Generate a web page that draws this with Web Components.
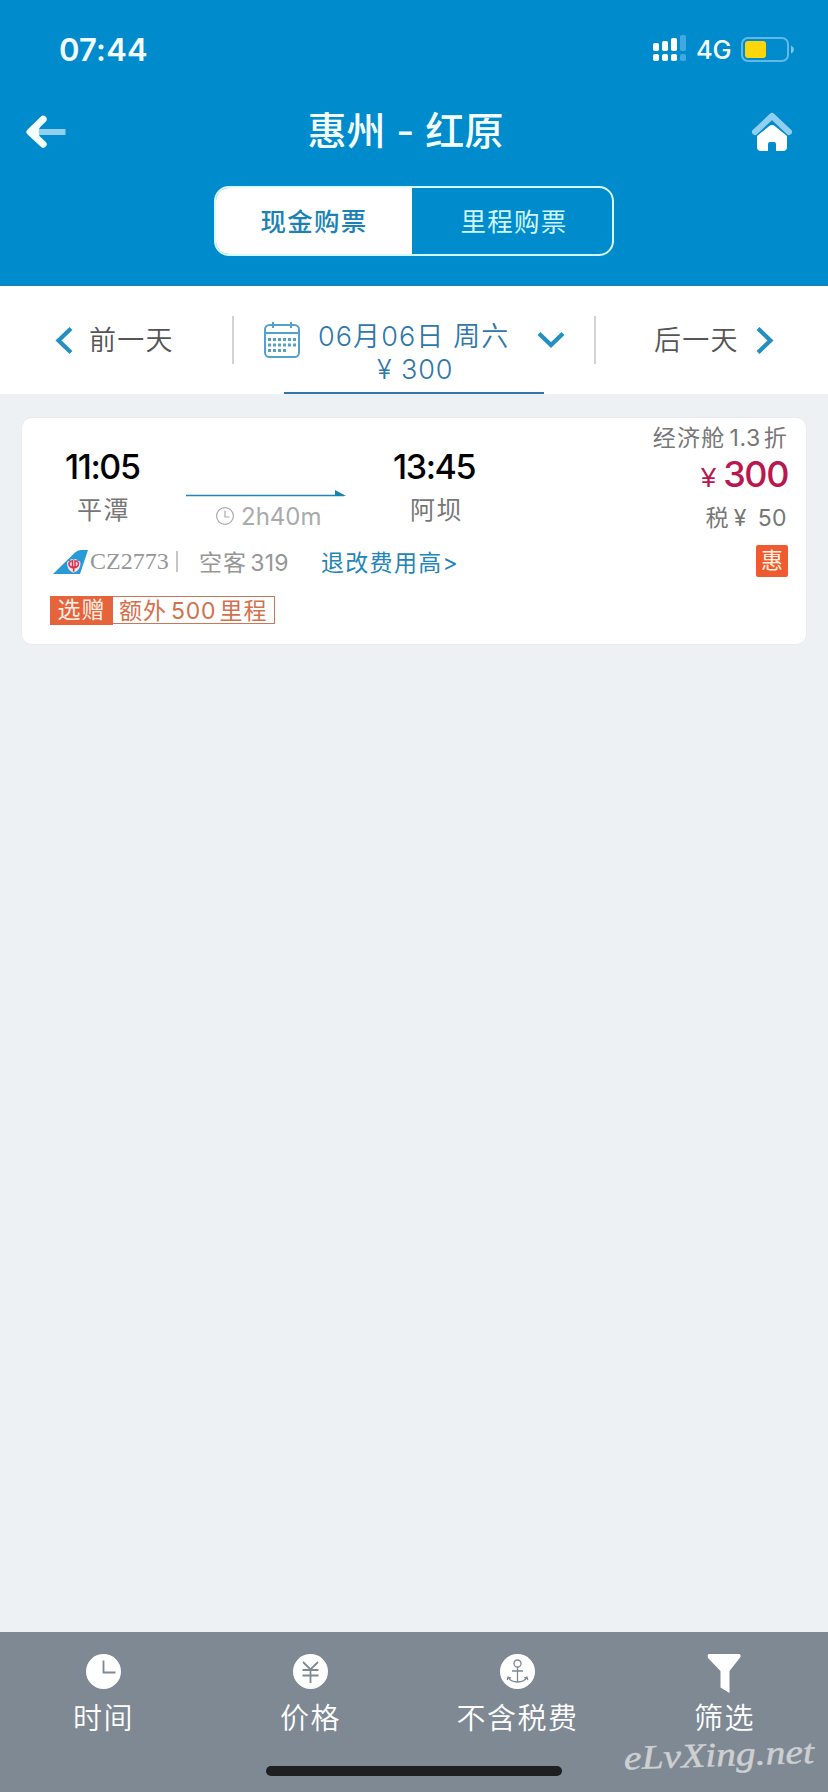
<!DOCTYPE html>
<html lang="zh-CN">
<head>
<meta charset="utf-8">
<title>惠州 - 红原</title>
<style>
html,body{margin:0;padding:0}
body{width:828px;height:1792px;overflow:hidden;background:#edf1f4;font-family:Inter,"Noto Sans CJK SC",sans-serif}
</style>
</head>
<body>
<flight-app></flight-app>
<script>
const define = (name, css, html) => {
  const t = document.createElement('template');
  t.innerHTML = `<style>*{box-sizing:border-box}svg{display:block;overflow:visible}${css}</style>${html}`;
  customElements.define(name, class extends HTMLElement {
    constructor() {
      super();
      this.attachShadow({ mode: 'open' }).append(t.content.cloneNode(true));
    }
  });
};

define('status-bar', `
:host{display:flex;height:100px;padding:0 34px 0 59px;color:#f4ffff}
.time{font-size:31px;font-weight:600;line-height:40px;margin-top:30px;letter-spacing:.2px;flex:1}
.net{font-size:25.5px;font-weight:500;line-height:30px;margin:35px 0 0 10px;width:36px;letter-spacing:-.3px}
.sig{margin-top:35px}.bat{margin:37px 0 0 9px}`, `
<span class="time">07:44</span>
<svg class="sig" width="33" height="26" fill="#fff"><rect y="8" width="6" height="8" rx="1.8"/><rect x="9" y="6" width="6" height="10" rx="1.8"/><rect x="18" y="3" width="6" height="13" rx="1.8"/><rect y="19" width="6" height="7" rx="1.8"/><rect x="9" y="19" width="6" height="7" rx="1.8"/><rect x="18" y="19" width="6" height="7" rx="1.8"/><g fill="#42a8df"><rect x="27" width="6" height="16" rx="1.8"/><rect x="27" y="19" width="6" height="7" rx="1.8"/></g></svg>
<span class="net">4G</span>
<svg class="bat" width="53" height="25"><rect x="1" y="1" width="46" height="23" rx="6" fill="none" stroke="#62b9e8" stroke-width="2"/><rect x="4" y="4" width="21" height="17" rx="3" fill="#fcd60b"/><path d="M50 8.5Q53 10 53 12.5T50 16.5Z" fill="#80c5e9"/></svg>`);

define('title-bar', `
:host{display:flex;align-items:flex-start;height:86px;padding:0 36px 0 26px;color:#f4ffff}
.b{margin-top:15px}.h{margin-top:12px}
h1{flex:1;text-align:center;margin:0;padding-right:7px;font-size:39px;font-weight:500;line-height:61px;letter-spacing:.2px}`, `
<svg class="b" width="40" height="34"><path d="M12 17H39.5" stroke="#91cff0" stroke-width="6"/><path d="M17.2 4.2L4 17L17.2 29.2" fill="none" stroke="#f4ffff" stroke-width="7" stroke-linecap="round" stroke-linejoin="round"/><path d="M15 10Q10.500 17 15 24L3 17Z" fill="#f4ffff"/></svg>
<h1><slot></slot></h1>
<svg class="h" width="40" height="39"><path d="M3 20L20 4L37 20" fill="none" stroke="#91cff0" stroke-width="6" stroke-linecap="round" stroke-linejoin="round"/><path d="M5 24L17 14.2Q20 12 23 14.2L35 24V35Q35 39 31 39H24V32Q24 30 22 30H18Q16 30 16 32V39H9Q5 39 5 35Z" fill="#fff"/></svg>`);

define('mode-switch', `
:host{display:flex;width:400px;height:70px;margin:0 auto;border:2px solid #d5fbff;border-radius:15px;overflow:hidden;font-size:25.5px;letter-spacing:1.2px;line-height:67px;text-align:center}
.on{width:196px;background:#fff;color:#1b82b5;font-weight:500}
.off{flex:1;color:#cff7ff;padding-left:4px}`, `
<div class="on"><slot name="cash"></slot></div><div class="off"><slot name="miles"></slot></div>`);

define('app-header', `
:host{display:block;height:286px;background:#008bcd;border-bottom:1px solid #1b7eb5}`, `
<status-bar></status-bar><title-bar>惠州 - 红原</title-bar>
<mode-switch><span slot="cash">现金购票</span><span slot="miles">里程购票</span></mode-switch>`);

define('date-bar', `
:host{display:flex;height:108px;background:#fff;color:#555;font-size:27px;white-space:nowrap}
.side{display:flex;width:232px;padding:41px 0 0 56px;font-weight:350;letter-spacing:1.2px;line-height:27px}
.side span{line-height:28px;margin-left:17px}
.rule{width:2px;height:48px;margin-top:30px;background:#d0d4d7}
.mid{display:grid;grid-template-columns:36px 192px 26px;column-gap:17px;width:360px;padding-left:30px;color:#3077aa;position:relative;align-content:start;font-weight:350}
.mid .cal{margin-top:36px}.mid .dn{margin:46px 0 0 12px}
.date{padding-top:34px;line-height:34px;letter-spacing:1.1px;margin-left:1px}
.fare{grid-column:1/4;line-height:30px;margin-top:-3px;padding-left:113px;letter-spacing:.9px}
.mid i{position:absolute;left:50px;bottom:0;width:260px;height:2px;background:#3375a8}
.next{padding-left:58px}.next span{margin:0 18px 0 0}
path{fill:none;stroke:#2490c0;stroke-width:4.2}`, `
<div class="side"><svg width="16" height="27"><path d="M15 1.5L2.5 13.5L15 25.5"/></svg><span>前一天</span></div>
<div class="rule"></div>
<div class="mid">
<svg class="cal" width="36" height="36" fill="none" stroke="#55a2c8" stroke-width="2"><rect x="1" y="3" width="34" height="32" rx="4.5"/><line x1="1" x2="35" y1="11" y2="11"/><line x1="9" x2="9" y1="0" y2="6"/><line x1="27" x2="27" y1="0" y2="6"/><g stroke-width="3" stroke-dasharray="3 2"><line x1="4" x2="32" y1="17.5" y2="17.5"/><line x1="4" x2="32" y1="23" y2="23"/><line x1="4" x2="22" y1="28.5" y2="28.5"/></g></svg>
<span class="date">06月06日 周六</span>
<svg class="dn" width="26" height="16"><path d="M1 1.5L13 13L25 1.5"/></svg>
<span class="fare">¥ 300</span><i></i></div>
<div class="rule"></div>
<div class="side next"><span>后一天</span><svg width="16" height="27"><path d="M1 1.5L13.5 13.5L1 25.5"/></svg></div>`);

define('flight-card', `
:host{display:block;width:786px;height:228px;margin:23px 0 0 21px;background:#fff;border:1px solid #e8ecef;border-radius:11px;color:#777;white-space:nowrap}
.top{display:grid;grid-template-columns:164px 159px 170px 1fr;height:124px}
.stop{text-align:center;padding-top:29px}
.stop b{display:block;color:#000;font-size:34px;font-weight:550;line-height:40px;letter-spacing:-1.4px}
.stop span{display:block;font-size:25px;line-height:34px;letter-spacing:1.5px;padding-top:6px}
.a{text-align:left;padding-left:43px}.a span{padding-left:12px}
.z{text-align:left;padding-left:48px}.z span{padding-left:17px}
.path{padding-top:72px}
.dur{display:flex;margin:8px 0 0 30px;color:#aaa;font-size:24px;line-height:24px;letter-spacing:0}
.dur svg{margin:2px 7px 0 0}
.price{text-align:right;padding:3px 19px 0 0;font-size:23px}
.cabin{line-height:34px;letter-spacing:1.2px;margin-right:-1px}.cabin span{margin:0 3px 0 4px;letter-spacing:.6px}
.cost{height:42px;line-height:38px;color:#b8184f;font-size:27px;font-family:"Liberation Sans",sans-serif}
.cost strong{font:500 36px/38px Inter,sans-serif;margin:0 -1px 0 7px;letter-spacing:-1.4px}
.tax{line-height:34px;margin-top:4px;letter-spacing:.4px}.tax span{margin:0 4px 0 5px}
.info{display:flex;height:42px;margin-top:-2px;align-items:center;padding:0 18px 0 31px;font-size:23px;color:#969696}
.info svg{margin-top:2px}
.no{font:24px "Liberation Serif",serif;margin:1px 0 0 2px;width:86px}
.bar{width:2px;height:21px;background:#c6c6c6}
.plane{margin-left:21px;width:122px;letter-spacing:1.1px}.plane em{font-style:normal;margin-left:3px;letter-spacing:.3px}
.rule{color:#2486b8;letter-spacing:1.3px}
.hui{margin-left:auto;width:32px;height:32px;border-radius:2px;background:#f05a31;color:#fff1df;font-size:22px;line-height:31px;text-align:center}
.promo{display:flex;margin:14px 0 0 28px;font-size:23px;color:#d5704d}
.promo span{height:29px;line-height:28px}
.tag{width:63px;background:#e5643c;color:#fff0e5;text-align:center;letter-spacing:1px}
.promo .gift{width:162px;height:28px;border:1px solid #ce7659;border-left:0;padding-left:6px;letter-spacing:1px}
.gift em{font-style:normal;margin:0 3px 0 4px;letter-spacing:.8px}`, `
<div class="top">
<div class="stop a"><b>11:05</b><span>平潭</span></div>
<div class="path"><svg width="160" height="7"><path d="M0 5.5H158" stroke="#2286b5" stroke-width="1.3"/><path d="M149 0L160 6H149Z" fill="#1782b2"/></svg>
<div class="dur"><svg width="18" height="18" fill="none" stroke="#aaa" stroke-width="1.2"><circle cx="9" cy="9" r="8.4"/><path d="M9 3.5V10H13.5"/></svg>2h40m</div></div>
<div class="stop z"><b>13:45</b><span>阿坝</span></div>
<div class="price"><div class="cabin">经济舱<span>1.3</span>折</div><div class="cost">¥<strong>300</strong></div><div class="tax">税<span>¥</span> 50</div></div>
</div>
<div class="info">
<svg width="35" height="24"><path d="M0 24L22 2.500Q24.500 0 28 0H35L27 24Z" fill="#269bd6"/><g fill="none" stroke-linecap="round"><path d="M16 13Q16 19 20.500 20.500Q25.500 19 25.500 13M19 11V17M22.500 11V17" stroke="#f6dfe6" stroke-width="4"/><path d="M16 13Q15.500 17 20.500 18Q26 17 25.500 13M16 13L18 11M25.500 13L23.500 11M19.500 10.500V17M22 10.500V17M20.700 17V21" stroke="#d5324a" stroke-width="1.5"/></g></svg>
<span class="no">CZ2773</span><span class="bar"></span><span class="plane">空客<em>319</em></span><span class="rule">退改费用高&gt;</span><span class="hui">惠</span></div>
<div class="promo"><span class="tag">选赠</span><span class="gift">额外<em>500</em>里程</span></div>`);

define('tab-item', `
:host{display:flex;flex-direction:column;align-items:center;flex:1;padding-top:22px;color:#fff;font-size:29px;font-weight:350;line-height:44px;letter-spacing:1.5px;white-space:nowrap}
.i{height:43px}`, `<div class="i"><slot name="icon"></slot></div><span><slot></slot></span>`);

define('tab-bar', `
:host{display:flex;position:relative;height:160px;background:#7e8994}
.home{position:absolute;left:266px;top:134px;width:296px;height:10px;border-radius:5px;background:#1f1f1f}
.mark{position:absolute;left:623px;top:104px}
g,.l{fill:none;stroke:#7e8994;stroke-width:1.8}`, `
<tab-item><svg slot="icon" width="35" height="35"><circle cx="17.5" cy="17.5" r="17.5" fill="#fff"/><path class="l" d="M17.5 6.5V18.5H29.5"/></svg>时间</tab-item>
<tab-item><svg slot="icon" width="35" height="35"><circle cx="17.5" cy="17.5" r="17.5" fill="#fff"/><path class="l" d="M10 8L17.5 15.5L25 8M17.5 15.5V29M9.5 16H25.5M9.5 21.5H25.5"/></svg>价格</tab-item>
<tab-item><svg slot="icon" width="35" height="35"><circle cx="17.5" cy="17.5" r="17.5" fill="#fff"/><g style="stroke-width:1.3"><circle cx="17.5" cy="9.5" r="3.5"/><path d="M17.5 13V28M12 17H23M8 23Q10.5 28 17.5 28T27 23M7.3 26L8 23L11 24M27.7 26L27 23L24 24"/></g></svg>不含税费</tab-item>
<tab-item><svg slot="icon" width="35" height="40"><path d="M1.5 0H32.5Q34 .5 33.5 3L22.5 17V39L13.5 33.5V17L1 4Q0 1 1.5 0Z" fill="#fff"/></svg>筛选</tab-item>
<div class="home"></div>
<svg class="mark" width="196" height="44"><text x="1" y="30" textLength="190" lengthAdjust="spacingAndGlyphs" fill="#cdcfd1" stroke="#cdcfd1" stroke-width=".5" font-family="'Liberation Serif',serif" font-style="italic" font-size="34" transform="rotate(-2 98 22)">eLvXing.net</text></svg>`);

define('flight-app', `
:host{display:flex;flex-direction:column;width:828px;height:1792px;background:#edf1f4}
tab-bar{margin-top:auto}`, `
<app-header></app-header><date-bar></date-bar><flight-card></flight-card><tab-bar></tab-bar>`);
</script>
</body>
</html>
